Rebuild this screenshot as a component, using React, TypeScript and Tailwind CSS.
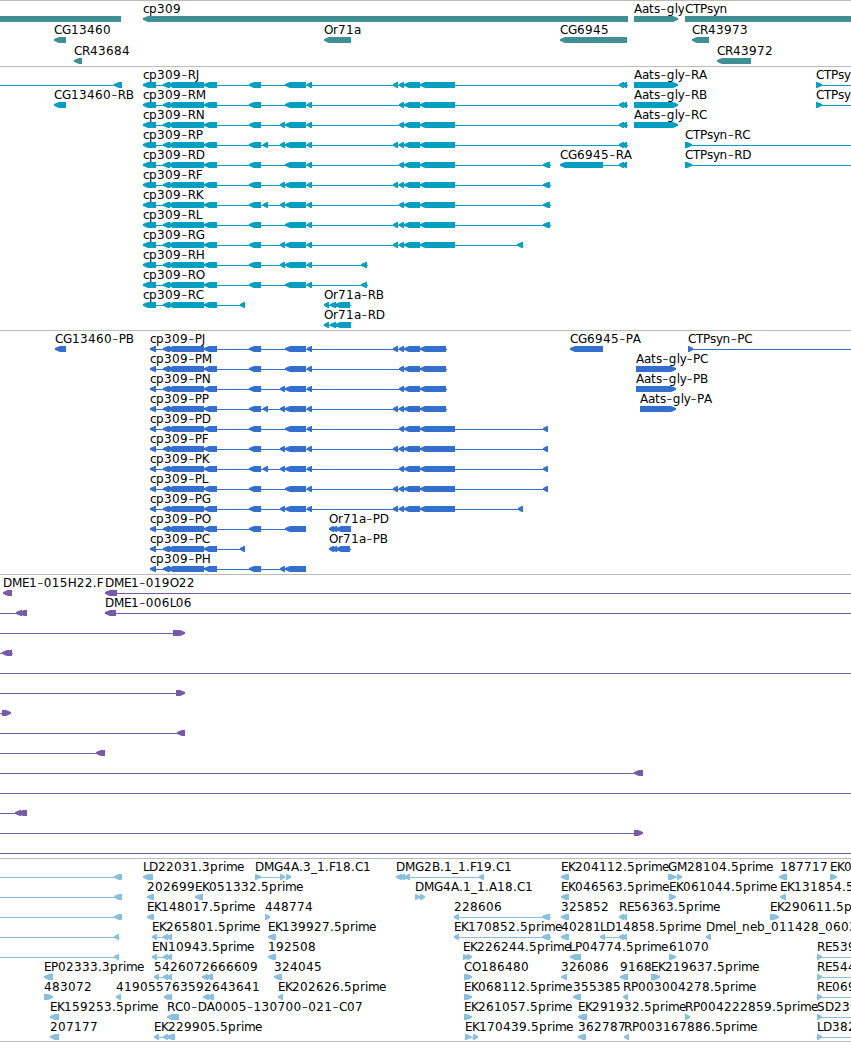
type Label = [number, string, number?];
type Row = { labels?: Label[]; lines?: [number, number][]; shapes?: string };
type TrackData = { name: string; color: string; height: number; pitch: number; rows: Row[] };

const END = 851;

const ADVANCE: Record<string, number> = {
  A: 8, B: 8, C: 8, D: 9, E: 7, F: 6, G: 9, H: 9, J: 4, K: 7, L: 6, M: 10, N: 9, O: 9, P: 7, R: 8, S: 8, T: 7,
  a: 7, b: 8, c: 6, e: 7, g: 8, i: 3, l: 3, m: 11, n: 8, p: 8, r: 5, s: 6, t: 5, y: 6.5,
  '.': 4, '-': 6.75, _: 6,
};

const BODY = 'L163-170 L168-204 L204-217 ';
const E = 'L249-261 ';
const X = 'L263-268 ';
const Y = 'L280-285 ';
const F = 'L285-306 ';
const G = 'L307-312 ';
const H = 'L393-398 ';
const J = 'L399-404 L404-420 ';
const K = 'L420-455 ';
const KP = 'L420-446 ';
const TAIL = 'L619-624 L622-627 ';
const T = 'L143-156 ' + BODY;
const P = 'L150-156 ' + BODY;

const genes: Row[] = [
  { labels: [[143, 'cp309'], [634, 'Aats-gly', 684], [685, 'CTPsyn']], shapes: 'B0-121 L143-628 R634-678 B685-851' },
  { labels: [[54, 'CG13460'], [324, 'Or71a'], [560, 'CG6945'], [692, 'CR43973']], shapes: 'L54-66 L324-351 L560-627 L692-709' },
  { labels: [[74, 'CR43684'], [717, 'CR43972']], shapes: 'L74-82 L717-751' },
];

const transcripts: Row[] = [
  { labels: [[143, 'cp309-RJ'], [634, 'Aats-gly-RA'], [816, 'CTPsy']], lines: [[0, 116], [145, 628], [818, END]], shapes: 'L114-122 ' + T + E + F + G + H + J + K + TAIL + 'R634-678 R816-822' },
  { labels: [[54, 'CG13460-RB'], [143, 'cp309-RM'], [634, 'Aats-gly-RB'], [816, 'CTPsy']], lines: [[145, 628], [818, END]], shapes: 'L54-66 ' + T + E + F + G + J + K + TAIL + 'R634-678 R816-822' },
  { labels: [[143, 'cp309-RN'], [634, 'Aats-gly-RC']], lines: [[145, 628]], shapes: T + E + Y + F + G + J + K + TAIL + 'R634-678' },
  { labels: [[143, 'cp309-RP'], [685, 'CTPsyn-RC']], lines: [[145, 628], [687, END]], shapes: T + E + X + Y + F + G + H + J + K + TAIL + 'R685-692' },
  { labels: [[143, 'cp309-RD'], [560, 'CG6945-RA'], [685, 'CTPsyn-RD']], lines: [[145, 551], [562, 627], [687, END]], shapes: T + E + F + G + J + K + 'L543-550 L560-603 ' + TAIL + 'R685-692' },
  { labels: [[143, 'cp309-RF']], lines: [[145, 551]], shapes: T + E + Y + F + G + H + J + K + 'L543-550' },
  { labels: [[143, 'cp309-RK']], lines: [[145, 551]], shapes: T + E + X + Y + F + G + J + K + 'L543-550' },
  { labels: [[143, 'cp309-RL']], lines: [[145, 551]], shapes: T + E + F + G + H + J + K + 'L543-550' },
  { labels: [[143, 'cp309-RG']], lines: [[145, 523]], shapes: T + E + Y + F + G + H + J + K + 'L517-523' },
  { labels: [[143, 'cp309-RH']], lines: [[145, 368]], shapes: T + E + Y + F + G + 'L361-367' },
  { labels: [[143, 'cp309-RO']], lines: [[145, 368]], shapes: T + E + F + G + 'L361-367' },
  { labels: [[143, 'cp309-RC'], [324, 'Or71a-RB']], lines: [[145, 245], [326, 351]], shapes: T + 'L240-245 L324-329 L330-336 L335-350' },
  { labels: [[324, 'Or71a-RD']], lines: [[326, 351]], shapes: 'L324-329 L330-336 L335-351' },
];

const proteins: Row[] = [
  { labels: [[55, 'CG13460-PB'], [150, 'cp309-PJ'], [570, 'CG6945-PA'], [688, 'CTPsyn-PC']], lines: [[152, 447], [690, END]], shapes: 'L55-66 ' + P + E + F + G + H + J + KP + 'L570-603 R688-693' },
  { labels: [[150, 'cp309-PM'], [636, 'Aats-gly-PC']], lines: [[152, 447]], shapes: P + E + F + G + J + KP + 'R636-676' },
  { labels: [[150, 'cp309-PN'], [636, 'Aats-gly-PB']], lines: [[152, 447]], shapes: P + E + Y + F + G + J + KP + 'R636-676' },
  { labels: [[150, 'cp309-PP'], [640, 'Aats-gly-PA']], lines: [[152, 447]], shapes: P + E + X + Y + F + G + H + J + KP + 'R640-676' },
  { labels: [[150, 'cp309-PD']], lines: [[152, 548]], shapes: P + E + F + G + J + K + 'L543-548' },
  { labels: [[150, 'cp309-PF']], lines: [[152, 548]], shapes: P + E + Y + F + G + H + J + K + 'L543-548' },
  { labels: [[150, 'cp309-PK']], lines: [[152, 548]], shapes: P + E + X + Y + F + G + J + K + 'L543-548' },
  { labels: [[150, 'cp309-PL']], lines: [[152, 548]], shapes: P + E + F + G + H + J + K + 'L543-548' },
  { labels: [[150, 'cp309-PG']], lines: [[152, 523]], shapes: P + E + Y + F + G + H + J + K + 'L518-523' },
  { labels: [[150, 'cp309-PO'], [329, 'Or71a-PD']], lines: [[152, 306], [331, 351]], shapes: P + E + F + 'L329-334 L332-337 L336-351' },
  { labels: [[150, 'cp309-PC'], [329, 'Or71a-PB']], lines: [[152, 245], [331, 351]], shapes: P + 'L240-245 L329-334 L332-337 L336-350' },
  { labels: [[150, 'cp309-PH']], lines: [[152, 306]], shapes: P + E + Y + F },
];

const clones: Row[] = [
  { labels: [[3, 'DME1-015H22.F', 103], [105, 'DME1-019O22']], lines: [[116, END]], shapes: 'L3-12 L105-117' },
  { labels: [[105, 'DME1-006L06']], lines: [[0, 20], [115, END]], shapes: 'L16-22 L19-27 L105-116' },
  { lines: [[0, 185]], shapes: 'R173-185' },
  { lines: [[0, 13]], shapes: 'L2-12' },
  { lines: [[0, END]] },
  { lines: [[0, 178]], shapes: 'R176-185' },
  { lines: [[0, 4]], shapes: 'R2-11' },
  { lines: [[0, 180]], shapes: 'L177-185' },
  { lines: [[0, 99]], shapes: 'L96-105' },
  { lines: [[0, 637]], shapes: 'L634-643' },
  { lines: [[0, END]] },
  { lines: [[0, 18]], shapes: 'L15-21 L18-27' },
  { lines: [[0, 636]], shapes: 'R634-643' },
  { lines: [[0, END]] },
];

const ests: Row[] = [
  { labels: [[143, 'LD22031.3prime'], [255, 'DMG4A.3_1.F18.C1'], [396, 'DMG2B.1_1.F19.C1'], [561, 'EK204112.5prime'], [668, 'GM28104.5prime'], [780, '187717'], [830, 'EK0']], lines: [[0, 116], [257, 282], [408, 482], [676, 680]], shapes: 'L114-122 L143-153 R255-261 R280-285 R286-291 L396-402 L400-405 L404-410 L479-484 L561-569 R668-676 R677-682 L779-787 R830-837' },
  { labels: [[147, '202699'], [195, 'EK051332.5prime'], [415, 'DMG4A.1_1.A18.C1'], [561, 'EK046563.5prime'], [669, 'EK061044.5prime'], [780, 'EK131854.5']], lines: [[0, 116]], shapes: 'L114-122 L147-154 L195-203 R415-420 R420-425 L561-569 R669-676 L780-786' },
  { labels: [[147, 'EK148017.5prime'], [265, '448774'], [454, '228606'], [561, '325852'], [619, 'RE56363.5prime'], [770, 'EK290611.5p']], lines: [[0, 116], [456, 551]], shapes: 'L114-122 L147-154 R265-270 L454-459 L542-550 L561-569 L619-624 L622-627 R770-779' },
  { labels: [[152, 'EK265801.5prime'], [268, 'EK139927.5prime'], [454, 'EK170852.5prime'], [561, '40281'], [600, 'LD14858.5prime'], [706, 'Dmel_neb_011428_0603']], lines: [[0, 116], [154, 172], [456, 551], [602, 622]], shapes: 'L114-119 L152-157 L163-168 L167-172 L268-276 L454-459 L542-550 L561-569 L600-605 L619-624 L622-627 L706-711' },
  { labels: [[152, 'EN10943.5prime'], [268, '192508'], [463, 'EK226244.5prime'], [569, 'LP04774.5prime'], [669, '61070'], [817, 'RE539']], lines: [[0, 116], [154, 172], [819, END]], shapes: 'L114-119 L152-157 L163-168 L167-172 L268-276 R463-468 R467-472 L570-581 R669-676 R817-822' },
  { labels: [[44, 'EP02333.3prime'], [154, '5426072666609'], [274, '324045'], [464, 'CO186480'], [561, '326086'], [620, '9168'], [651, 'EK219637.5prime'], [817, 'RE544']], lines: [[156, 172], [819, END]], shapes: 'L44-53 L154-159 L163-168 L167-172 L202-208 L206-213 L274-282 R464-472 L561-567 L620-628 R651-660 R817-822' },
  { labels: [[44, '483072'], [116, '419055763592643641'], [278, 'EK202626.5prime'], [464, 'EK068112.5prime'], [573, '355385'], [623, 'RP003004278.5prime'], [817, 'RE069']], lines: [[819, END]], shapes: 'R44-53 L116-121 L164-169 L167-172 L203-209 L207-214 L278-283 R464-472 L573-581 L623-628 R817-822' },
  { labels: [[50, 'EK159253.5prime'], [167, 'RC0-DA0005-130700-021-C07'], [464, 'EK261057.5prime'], [578, 'EK291932.5prime'], [685, 'RP004222859.5prime'], [817, 'SD239']], lines: [[819, END]], shapes: 'L50-59 L167-179 R464-472 L578-587 R685-690 R817-822' },
  { labels: [[50, '207177'], [154, 'EK229905.5prime'], [465, 'EK170439.5prime'], [578, '362787'], [624, 'RP003167886.5prime'], [817, 'LD382']], lines: [[156, 172], [470, 474], [819, END]], shapes: 'L50-59 L154-159 L163-168 L167-175 R465-471 R473-478 L578-586 L624-629 R817-822' },
];

const tracks: TrackData[] = [
  { name: 'genes', color: '#3f8f94', height: 66, pitch: 21, rows: genes },
  { name: 'transcripts', color: '#009fc1', height: 264, pitch: 20, rows: transcripts },
  { name: 'proteins', color: '#326fce', height: 244, pitch: 20, rows: proteins },
  { name: 'clones', color: '#7759a8', height: 284, pitch: 20, rows: clones },
  { name: 'ests', color: '#89bfdf', height: 183, pitch: 20, rows: ests },
];

function shapePath(spec: string, y: number) {
  const kind = spec[0];
  const [a, b] = spec.slice(1).split('-').map(Number);
  if (kind === 'B') return `M${a} ${y}H${b}V${y + 6}H${a}Z`;
  const tip = kind === 'L' ? a : b;
  const back = kind === 'L' ? b : a;
  const dir = kind === 'L' ? 1 : -1;
  const taper = Math.min(5, b - a - 1);
  return (
    `M${tip} ${y + 2}L${tip + dir * taper * 0.5} ${y + 1}L${tip + dir * taper} ${y}H${back}V${y + 6}` +
    `H${tip + dir * taper}L${tip + dir * taper * 0.5} ${y + 5}L${tip} ${y + 3.7}Z`
  );
}

/* Every glyph has its own cell; hyphens are set larger and thinner so they span their wide cell. */
function LabelText({ x, y, text }: { x: number; y: number; text: string }) {
  const parts = text.split(/(-)/).filter(Boolean);
  let pen = x;
  return (
    <text y={y} fill="#000">
      {parts.map((part, i) => {
        const xs: number[] = [];
        for (const ch of part) {
          xs.push(pen);
          pen += ADVANCE[ch] ?? 8;
        }
        return part === '-' ? (
          <tspan key={i} x={xs[0] + 0.3} y={y + 1} className="text-[17px] font-extralight">
            {part}
          </tspan>
        ) : (
          <tspan key={i} x={xs.join(' ')} y={y}>
            {part}
          </tspan>
        );
      })}
    </text>
  );
}

function Track({ track }: { track: TrackData }) {
  return (
    <section className="w-full shrink-0">
      <svg className="block" width={END} height={track.height} viewBox={`0 0 ${END} ${track.height}`}>
        <rect width={END} height={1} fill="#bbbbbb" />
        {track.rows.map((row, i) => {
          const top = 16 + i * track.pitch;
          return (
            <g key={i}>
              {row.lines?.map(([a, b], n) => (
                <rect key={n} x={a} y={top + 3} width={b - a} height={1} fill={track.color} />
              ))}
              {row.shapes && (
                <path
                  fill={track.color}
                  d={row.shapes.trim().split(' ').map((s) => shapePath(s, top)).join('')}
                />
              )}
              {row.labels?.map(([x, text, clipAt]) => {
                const id = `${track.name}-${i}-${x}`;
                return (
                  <g key={x} clipPath={clipAt ? `url(#${id})` : undefined}>
                    {clipAt && (
                      <clipPath id={id}>
                        <rect x={x - 2} y={top - 14} width={clipAt - x + 2} height={18} />
                      </clipPath>
                    )}
                    <LabelText x={x} y={top - 3} text={text} />
                  </g>
                );
              })}
            </g>
          );
        })}
      </svg>
    </section>
  );
}

export default function App() {
  return (
    <main className="flex h-[1042px] w-[851px] flex-col overflow-hidden border-b border-[#bbbbbb] bg-white font-['DejaVu_Sans',sans-serif] text-[12px]">
      {tracks.map((track) => (
        <Track key={track.name} track={track} />
      ))}
    </main>
  );
}
